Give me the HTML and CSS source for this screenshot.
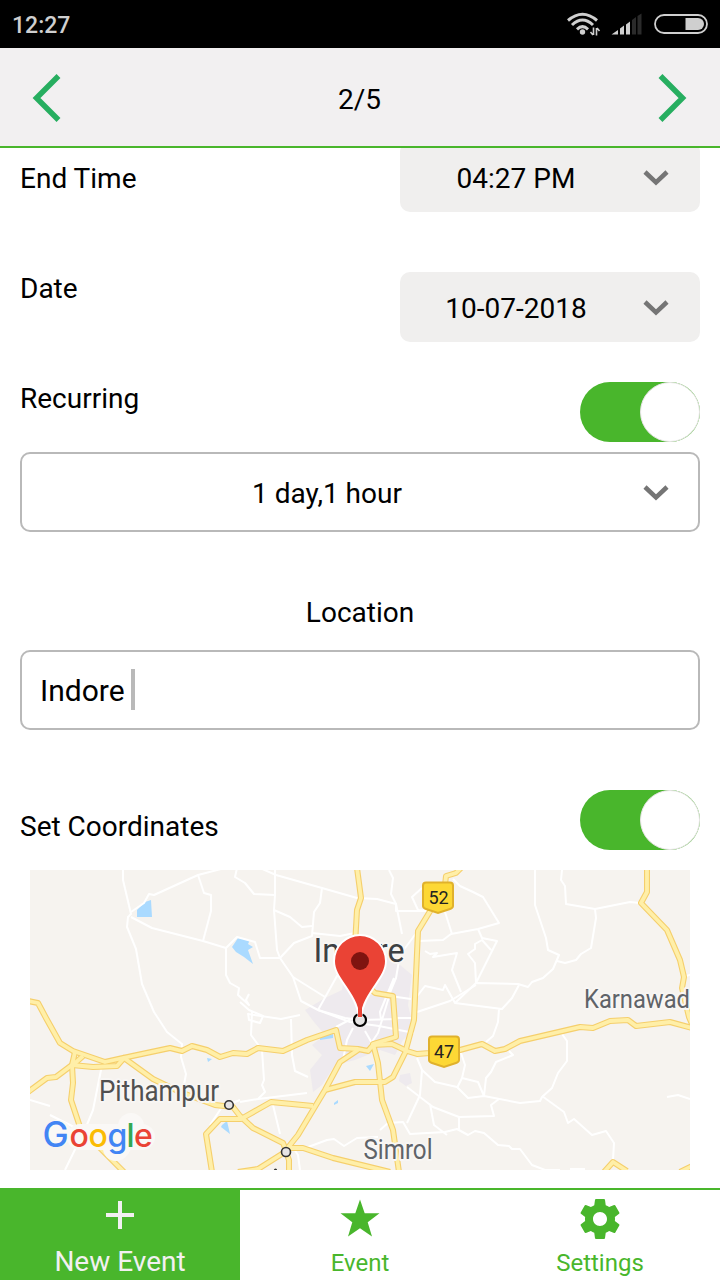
FILE: index.html
```html
<!DOCTYPE html>
<html lang="en">
<head>
    <meta charset="UTF-8">
    <meta name="viewport" content="width=device-width, initial-scale=1.0">
    <title>New Event</title>
    <link rel="stylesheet" href="styles.css">
</head>
<body>
    <div class="app">
        <div class="statusbar">
            <span class="clock">12:27</span>
            <svg class="status-icons" width="144" height="28" viewBox="566 10 144 28">
                <!-- wifi -->
                <g fill="none" stroke="#cfcfcf" stroke-width="3">
                    <path d="M568 20.5Q582.500 8 597 20.500"/>
                    <path d="M572 25Q582.500 15 593 25"/>
                    <path d="M577 29.300Q582.500 24 588 29.300"/>
                </g>
                <circle cx="582.500" cy="32" r="2.700" fill="#cfcfcf"/>
                <path d="M593.500 27.500V35M590.500 32L593 35M596.500 35.500V28M599.500 31L597 28" fill="none" stroke="#cfcfcf" stroke-width="1.600"/>
                <!-- signal -->
                <path d="M611.500 34.500L618 30V34.500ZM620 34.500V28.500L624 25.500V34.500ZM626 34.500V24.500L630 21.500V34.500Z" fill="#cfcfcf"/>
                <path d="M632 34.500V20L636 17V34.500ZM637.500 34.500V16L641.500 13.500V34.500Z" fill="#2b2b2b"/>
                <!-- battery -->
                <rect x="655" y="15" width="52" height="18" rx="9" fill="none" stroke="#cfcfcf" stroke-width="1.800"/>
                <path d="M685.500 18H698A6 6 0 0 1 698 30H685.500Z" fill="#cfcfcf"/>
            </svg>
        </div>

        <div class="header">
            <svg width="30" height="50" viewBox="0 0 30 50"><path d="M26.500 3L4.500 25L26.500 47" class="arrow"/></svg>
            <span class="step">2/5</span>
            <svg width="30" height="50" viewBox="0 0 30 50"><path d="M3.500 3L25.500 25L3.500 47" class="arrow"/></svg>
        </div>

        <div class="content">
            <div class="row end-row">
                <label class="low">End Time</label>
                <div class="select">
                    <span>04:27 PM</span>
                    <svg class="chevron" width="26" height="18" viewBox="0 0 26 18"><path d="M2 3L13 13.500L24 3"/></svg>
                </div>
            </div>
            <div class="row date-row">
                <label>Date</label>
                <div class="select">
                    <span>10-07-2018</span>
                    <svg class="chevron" width="26" height="18" viewBox="0 0 26 18"><path d="M2 3L13 13.500L24 3"/></svg>
                </div>
            </div>
            <div class="row">
                <label>Recurring</label>
                <div class="toggle"><div class="knob"></div></div>
            </div>
            <div class="box recurring">
                <span>1 day,1 hour</span>
                <svg class="chevron" width="26" height="18" viewBox="0 0 26 18"><path d="M2 3L13 13.500L24 3"/></svg>
            </div>

            <div class="title">Location</div>
            <div class="box location">
                <span>Indore</span>
                <div class="caret"></div>
            </div>

            <div class="row">
                <label class="low">Set Coordinates</label>
                <div class="toggle"><div class="knob"></div></div>
            </div>

            <svg class="map" width="660" height="300" viewBox="30 870 660 300">
                <rect x="30" y="870" width="660" height="300" fill="#f6f3ef"/>
                <!-- built up area -->
                <path class="city" d="M345 970L375 950L400 965L412 975L408 1005L414 1030L403 1040L395 1055L380 1050L355 1060L335 1065L322 1085L313 1092L310 1070L322 1055L312 1045L325 1035L314 1022L305 1010L325 998L342 990ZM400 1075L410 1073L412 1083L406 1086L399 1081Z"/>
                <!-- water -->
                <path class="water" d="M137 910L145 902L151 900L152 917H137ZM232 947L238 938L250 940L248 944L253 947L248 950L253 964L244 957L236 952ZM320 1037L333 1034V1038L320 1040ZM366 1066L374 1064L370 1071ZM334 1103L338 1100V1103L334 1105ZM222 1125L227 1121L230 1134L221 1127ZM207 1058L212 1059L208 1062Z"/>
                <g class="minor">
                    <path d="M123 870V880L131 914L128 917L127 927L136 949L142 984L154 1012L167 1032L182 1044L181 1057L186 1074L183 1090"/>
                    <path d="M131 912L144 903L149 894L154 895L198 875L221 869"/>
                    <path d="M198 875L204 893L211 895V911L203 941"/>
                    <path d="M131 917L152 928L203 941L226 948L237 937L255 942L260 958L280 958L294 943L312 936L314 912L320 903L322 888L276 875L260 868"/>
                    <path d="M226 948V975L230 983L239 988L238 995L249 1005L246 1000L249 994"/>
                    <path d="M237 868L235 877L245 883L254 894L275 895L274 910L277 950L280 958L293 977L301 1001L318 1010L345 1018L360 1020"/>
                    <path d="M275 870V895M274 910L290 917L302 927L312 926M312 933L340 936L355 933"/>
                    <path d="M322 888L357 898L377 899L396 904L396 911L430 911"/>
                    <path d="M389 870L393 878L391 894L396 904L402 934"/>
                    <path d="M293 977L325 997M318 1010L337 976L345 965"/>
                    <path d="M240 1002L249 1010L263 1016L260 1023L249 1020L248 1013M252 1012L251 1035L262 1050L264 1080L262 1085L265 1092L258 1099L240 1102"/>
                    <path d="M248 1014L281 1019L300 1015M291 1019L292 1055L295 1071L308 1077M258 1099L307 1093M273 1105L280 1134"/>
                    <path d="M417 932L400 955L396 978L391 990L382 1020L378 1033L370 1045M394 978L380 1012L381 1020"/>
                    <path d="M318 1010L350 1022L379 1026L414 1033M336 1027L353 1018M365 1031L373 1045M353 1028L347 1040L343 1060M361 1020L398 1019"/>
                    <path d="M418 941L443 940L451 934L478 929L499 923L483 897L473 892L460 886L453 879"/>
                    <path d="M430 911L418 910L412 897L422 888M445 912L452 934M478 929L482 938L497 941L476 983L475 963L468 954L475 949V944L482 940L491 950"/>
                    <path d="M425 951L430 954L437 953L433 957L457 953L452 970L461 992"/>
                    <path d="M415 999L425 986L443 990L445 985L455 1003L476 983L518 984L528 987L532 982L543 978L553 969L559 955L548 950L546 938L535 905V870"/>
                    <path d="M417 1012L450 1001L476 985M455 1003L502 1009L512 998L519 985M499 1009L498 1022L493 1036L486 1042"/>
                    <path d="M562 870L561 880L565 886L566 904L595 909L630 902L640 903M595 909L596 918L591 948L581 954L576 960L565 963L557 961"/>
                    <path d="M390 996L411 999M395 1018H413"/>
                    <path d="M562 1034L567 1041V1061L558 1073L552 1088L542 1097L540 1101L520 1103L484 1096L468 1098L457 1087L435 1082L422 1070L417 1058"/>
                    <path d="M509 1051L513 1055L496 1062L491 1072L486 1078L484 1096L478 1082L462 1078L465 1065L461 1053M462 1078L457 1088"/>
                    <path d="M542 1096L564 1112L568 1123L574 1119L592 1135L606 1131L614 1143L613 1160"/>
                    <path d="M499 1099L491 1105L494 1116L459 1117V1130M407 1087L433 1107L459 1117M422 1070L420 1095L407 1123M430 1104L434 1125L447 1135"/>
                    <path d="M380 1130L388 1123L403 1122L410 1134L445 1132L457 1129L468 1135L475 1131L484 1133L498 1145L509 1146L512 1149L520 1149L532 1165L545 1170H560M570 1169H585"/>
                    <path d="M300 1150L327 1140L334 1139L344 1146L357 1138L378 1137M290 1143L298 1155L300 1170"/>
                    <path d="M667 1097L678 1095L690 1099M684 977L692 974"/>
                    <path d="M30 1100L50 1106M102 1065L93 1110L86 1127L65 1170M50 1115L80 1130M210 1125L222 1107L240 1100"/>
                </g>
                <g class="major">
                    <path id="r1" d="M28 1001L38 1003L46 1018L60 1043L73 1051L105 1062L123 1058L170 1048L182 1051L192 1046L207 1050L220 1057L233 1053L247 1054L258 1048L283 1051L307 1040L336 1030L340 1048L358 1049L368 1051L373 1045L392 1044L407 1051L417 1054L430 1053L460 1050L482 1044L495 1051L505 1049L520 1041L580 1027L593 1028L610 1021L628 1020L636 1026L670 1022L692 1028"/>
                    <path id="r2" d="M28 1092L47 1078L56 1077L72 1065L93 1067L117 1066L124 1058L153 1079L180 1092L215 1105L233 1107L240 1116L253 1128L283 1143L286 1150"/>
                    <path id="r3" d="M75 1052L72 1065L73 1083L71 1100L80 1127L100 1148L124 1172M83 1056L74 1064"/>
                    <path id="r4" d="M212 1172L206 1134L220 1119L241 1119L271 1102L313 1106M286 1150L298 1135L325 1090L340 1062L358 1050"/>
                    <path id="r5" d="M325 1090L355 1082L385 1082L393 1077L405 1053L414 1020L418 931L432 908L445 885L446 876L456 873L461 868"/>
                    <path id="r6" d="M357 868L361 898L357 910L355 945M372 990L375 993L393 996L396 1037L373 1044L378 1063L382 1100L393 1130L399 1172"/>
                    <path id="r7" d="M289 1148H303L333 1158L390 1172M285 1152L258 1169L238 1172M286 1152L289 1160V1172"/>
                    <path id="r8" d="M647 868V892L641 903L667 930L680 960L684 977L682 988L689 1017L692 1024M604 1172L613 1162L627 1171M680 1172L692 1166"/>
                </g>
                <g class="major-fill">
                    <use href="#r1"/><use href="#r2"/><use href="#r3"/><use href="#r4"/>
                    <use href="#r5"/><use href="#r6"/><use href="#r7"/><use href="#r8"/>
                </g>
                <!-- town markers -->
                <g fill="#e6e4e4" stroke="#333" stroke-width="1.600">
                    <circle cx="229" cy="1105" r="4.300"/>
                    <circle cx="286" cy="1152" r="4.500"/>
                    <circle cx="360" cy="1020" r="6" stroke="#000" stroke-width="2.200"/>
                </g>
                <circle cx="275.500" cy="1170" r="1.600" fill="#333"/>
                <!-- road shields -->
                <g class="shield">
                    <path d="M426 882.500H450Q453 882.500 453 885.500V906Q453 908 450 909L438 913L426 909Q423 908 423 906V885.500Q423 882.500 426 882.500Z"/>
                    <path d="M432 1036.500H456Q459 1036.500 459 1039.500V1060Q459 1062 456 1063L444 1067L432 1063Q429 1062 429 1060V1039.500Q429 1036.500 432 1036.500Z"/>
                    <text x="438.500" y="904">52</text>
                    <text x="444" y="1058">47</text>
                </g>
                <g class="place">
                    <text x="313.500" y="962" textLength="91" lengthAdjust="spacingAndGlyphs" font-size="34" fill="#3c4043">Indore</text>
                    <text x="99" y="1101" textLength="120" lengthAdjust="spacingAndGlyphs" font-size="29" fill="#505050">Pithampur</text>
                    <text x="584" y="1008" textLength="106" lengthAdjust="spacingAndGlyphs" font-size="26" fill="#5f6368">Karnawad</text>
                    <text x="363.500" y="1158.500" textLength="69" lengthAdjust="spacingAndGlyphs" font-size="27" fill="#5f6368">Simrol</text>
                </g>
                <!-- pin -->
                <path d="M360 1017C358 1003 353 996 345 984C339 975 335 969 335 961A25 25 0 0 1 385 961C385 969 381 975 375 984C367 996 362 1003 360 1017Z" fill="#ea4335" stroke="#fff" stroke-width="4" paint-order="stroke"/>
                <path d="M358 1008H362V1017H358Z" fill="#ea4335"/>
                <circle cx="360" cy="961" r="9" fill="#7f1410"/>
                <path d="M57 1133H58M80 1137H142M118 1146L116 1148M131 1126V1137" class="logo-halo"/>
                <text class="google" y="1146.500"><tspan x="42.500" fill="#4285f4" font-size="35">G</tspan><tspan x="69.500" fill="#ea4335">o</tspan><tspan x="88.500" fill="#fbbc05">o</tspan><tspan x="107.500" fill="#4285f4">g</tspan><tspan x="126.500" fill="#34a853">l</tspan><tspan x="134" fill="#ea4335">e</tspan></text>
            </svg>
        </div>

        <div class="tabs">
            <div class="tab active">
                <svg width="40" height="40" viewBox="0 0 40 40"><path d="M20 2V30M6 16H34" stroke="#f2f0f1" stroke-width="4" fill="none"/></svg>
                <span>New Event</span>
            </div>
            <div class="tab">
                <svg width="40" height="40" viewBox="0 0 40 40"><path d="M20 0.500L24.700 14.300H39.500L27.700 23.200L32 37.500L20 29.300L8 37.500L12.300 23.200L0.500 14.300H15.300Z" fill="#49b62c"/></svg>
                <span>Event</span>
            </div>
            <div class="tab">
                <svg width="40" height="40" viewBox="2 2 20 20"><path fill="#49b62c" d="M19.430 12.980c.040-.320.070-.640.070-.980s-.030-.660-.070-.980l2.110-1.650c.190-.150.240-.420.120-.640l-2-3.460c-.120-.220-.390-.300-.610-.220l-2.490 1c-.520-.400-1.080-.730-1.690-.980l-.380-2.650C14.460 2.180 14.250 2 14 2h-4c-.250 0-.460.180-.490.420l-.380 2.650c-.610.250-1.170.590-1.690.980l-2.490-1c-.230-.090-.490 0-.610.220l-2 3.460c-.130.220-.070.490.120.640l2.110 1.650c-.040.320-.070.650-.070.980s.030.660.070.980l-2.110 1.650c-.190.150-.240.420-.120.640l2 3.460c.120.220.390.300.610.220l2.490-1c.520.400 1.080.730 1.690.980l.380 2.650c.030.240.240.420.490.420h4c.250 0 .460-.180.490-.420l.380-2.650c.610-.250 1.170-.590 1.690-.980l2.490 1c.230.090.490 0 .610-.220l2-3.460c.120-.220.070-.490-.120-.640l-2.110-1.650zM12 15.500c-1.930 0-3.500-1.570-3.500-3.500s1.570-3.500 3.500-3.500 3.500 1.570 3.500 3.500-1.570 3.500-3.500 3.500z"/></svg>
                <span>Settings</span>
            </div>
        </div>
    </div>
</body>
</html>
```
FILE: styles.css
```css
body {
    font-family: Roboto, "Liberation Sans", sans-serif;
    margin: 0;
    padding: 0;
    font-size: 28px;
    line-height: 33px;
    color: #000;
    background-color: #fff;
}
.app {
    display: flex;
    flex-direction: column;
    width: 720px;
    height: 1280px;
    overflow: hidden;
}
/* Top bars */
.statusbar {
    display: flex;
    align-items: center;
    justify-content: space-between;
    height: 48px;
    box-sizing: border-box;
    padding: 0 10px 0 12px;
    background-color: #000;
}
.clock {
    font-size: 23px;
    font-weight: 500;
    color: #cfcfcf;
    padding-top: 2px;
}
.header {
    display: flex;
    align-items: center;
    justify-content: space-between;
    height: 100px;
    box-sizing: border-box;
    padding: 2px 33px 0 32px;
    background-color: #f2f0f1;
    border-bottom: 2px solid #49b62c;
}
.step {
    padding-top: 2px;
}
.arrow {
    fill: none;
    stroke: #27ae60;
    stroke-width: 5.5;
}
/* Form, scrolled a little under the header */
.content {
    flex: 1;
    min-height: 0;
    overflow: hidden;
    padding: 0 20px;
}
.row {
    display: flex;
    justify-content: space-between;
    align-items: flex-start;
}
.end-row {
    margin-top: -6px;
    margin-bottom: 60px;
}
.date-row {
    margin-bottom: 40px;
}
.low {
    padding-top: 20px;
}
.select {
    display: flex;
    align-items: center;
    width: 300px;
    height: 70px;
    box-sizing: border-box;
    padding: 2px 31px 0 0;
    border-radius: 10px;
    background-color: #f0efee;
}
.select span,
.recurring span {
    flex: 1;
    padding-right: 11px;
    text-align: center;
}
.chevron {
    fill: none;
    stroke: #757575;
    stroke-width: 4.5;
}
.toggle {
    display: flex;
    justify-content: flex-end;
    width: 120px;
    height: 60px;
    border-radius: 30px;
    background-color: #49b62c;
}
.knob {
    width: 60px;
    height: 60px;
    box-sizing: border-box;
    border: 1px solid #e8e4e6;
    border-radius: 50%;
    background-color: #fff;
}
.box {
    display: flex;
    align-items: center;
    height: 80px;
    box-sizing: border-box;
    border: 2px solid #b9b9b9;
    border-radius: 10px;
}
.recurring {
    margin-top: 10px;
    padding: 2px 29px 0 0;
}
.title {
    margin: 64px 0 21px;
    text-align: center;
}
.location {
    margin-bottom: 60px;
    padding-left: 18px;
    font-size: 30px;
}
.caret {
    width: 4px;
    height: 41px;
    margin-left: 6px;
    margin-bottom: 2px;
    background-color: #b9b9b9;
}
/* Map */
.map {
    display: block;
    margin: 20px 10px 0;
}
.city {
    fill: #eeeaee;
}
.water {
    fill: #aadaff;
}
.minor {
    fill: none;
    stroke: #fff;
    stroke-width: 2;
    stroke-linejoin: round;
}
/* roads r1-r8 are drawn twice, casing first and the lighter fill on top */
.major,
.major-fill {
    fill: none;
    stroke: #f5cf6c;
    stroke-width: 6;
    stroke-linejoin: round;
}
.major-fill {
    stroke: #ffefa8;
    stroke-width: 3.8;
}
.shield path {
    fill: #fdd835;
    stroke: #e0b12c;
    stroke-width: 2;
}
.shield text {
    font-size: 18px;
    text-anchor: middle;
    fill: #222;
}
.place text {
    stroke: #f8f6f4;
    stroke-width: 4px;
    stroke-linejoin: round;
    paint-order: stroke;
}
.logo-halo {
    fill: none;
    stroke: #faf8f6;
    stroke-width: 26px;
    stroke-linecap: round;
}
.google {
    font-family: Inter, Roboto, sans-serif;
    font-size: 32px;
    font-weight: 500;
}
/* Bottom tabs */
.tabs {
    display: flex;
    height: 92px;
    box-sizing: border-box;
    border-top: 2px solid #49b62c;
}
.tab {
    flex: 1;
    display: flex;
    flex-direction: column;
    align-items: center;
    box-sizing: border-box;
    padding-top: 9px;
    font-size: 24px;
    color: #49b62c;
}
.tab span {
    margin-top: 8px;
}
.active {
    background-color: #49b62c;
    color: #f2f0f1;
    font-size: 28px;
}
.active span {
    margin-top: 6px;
}
```
